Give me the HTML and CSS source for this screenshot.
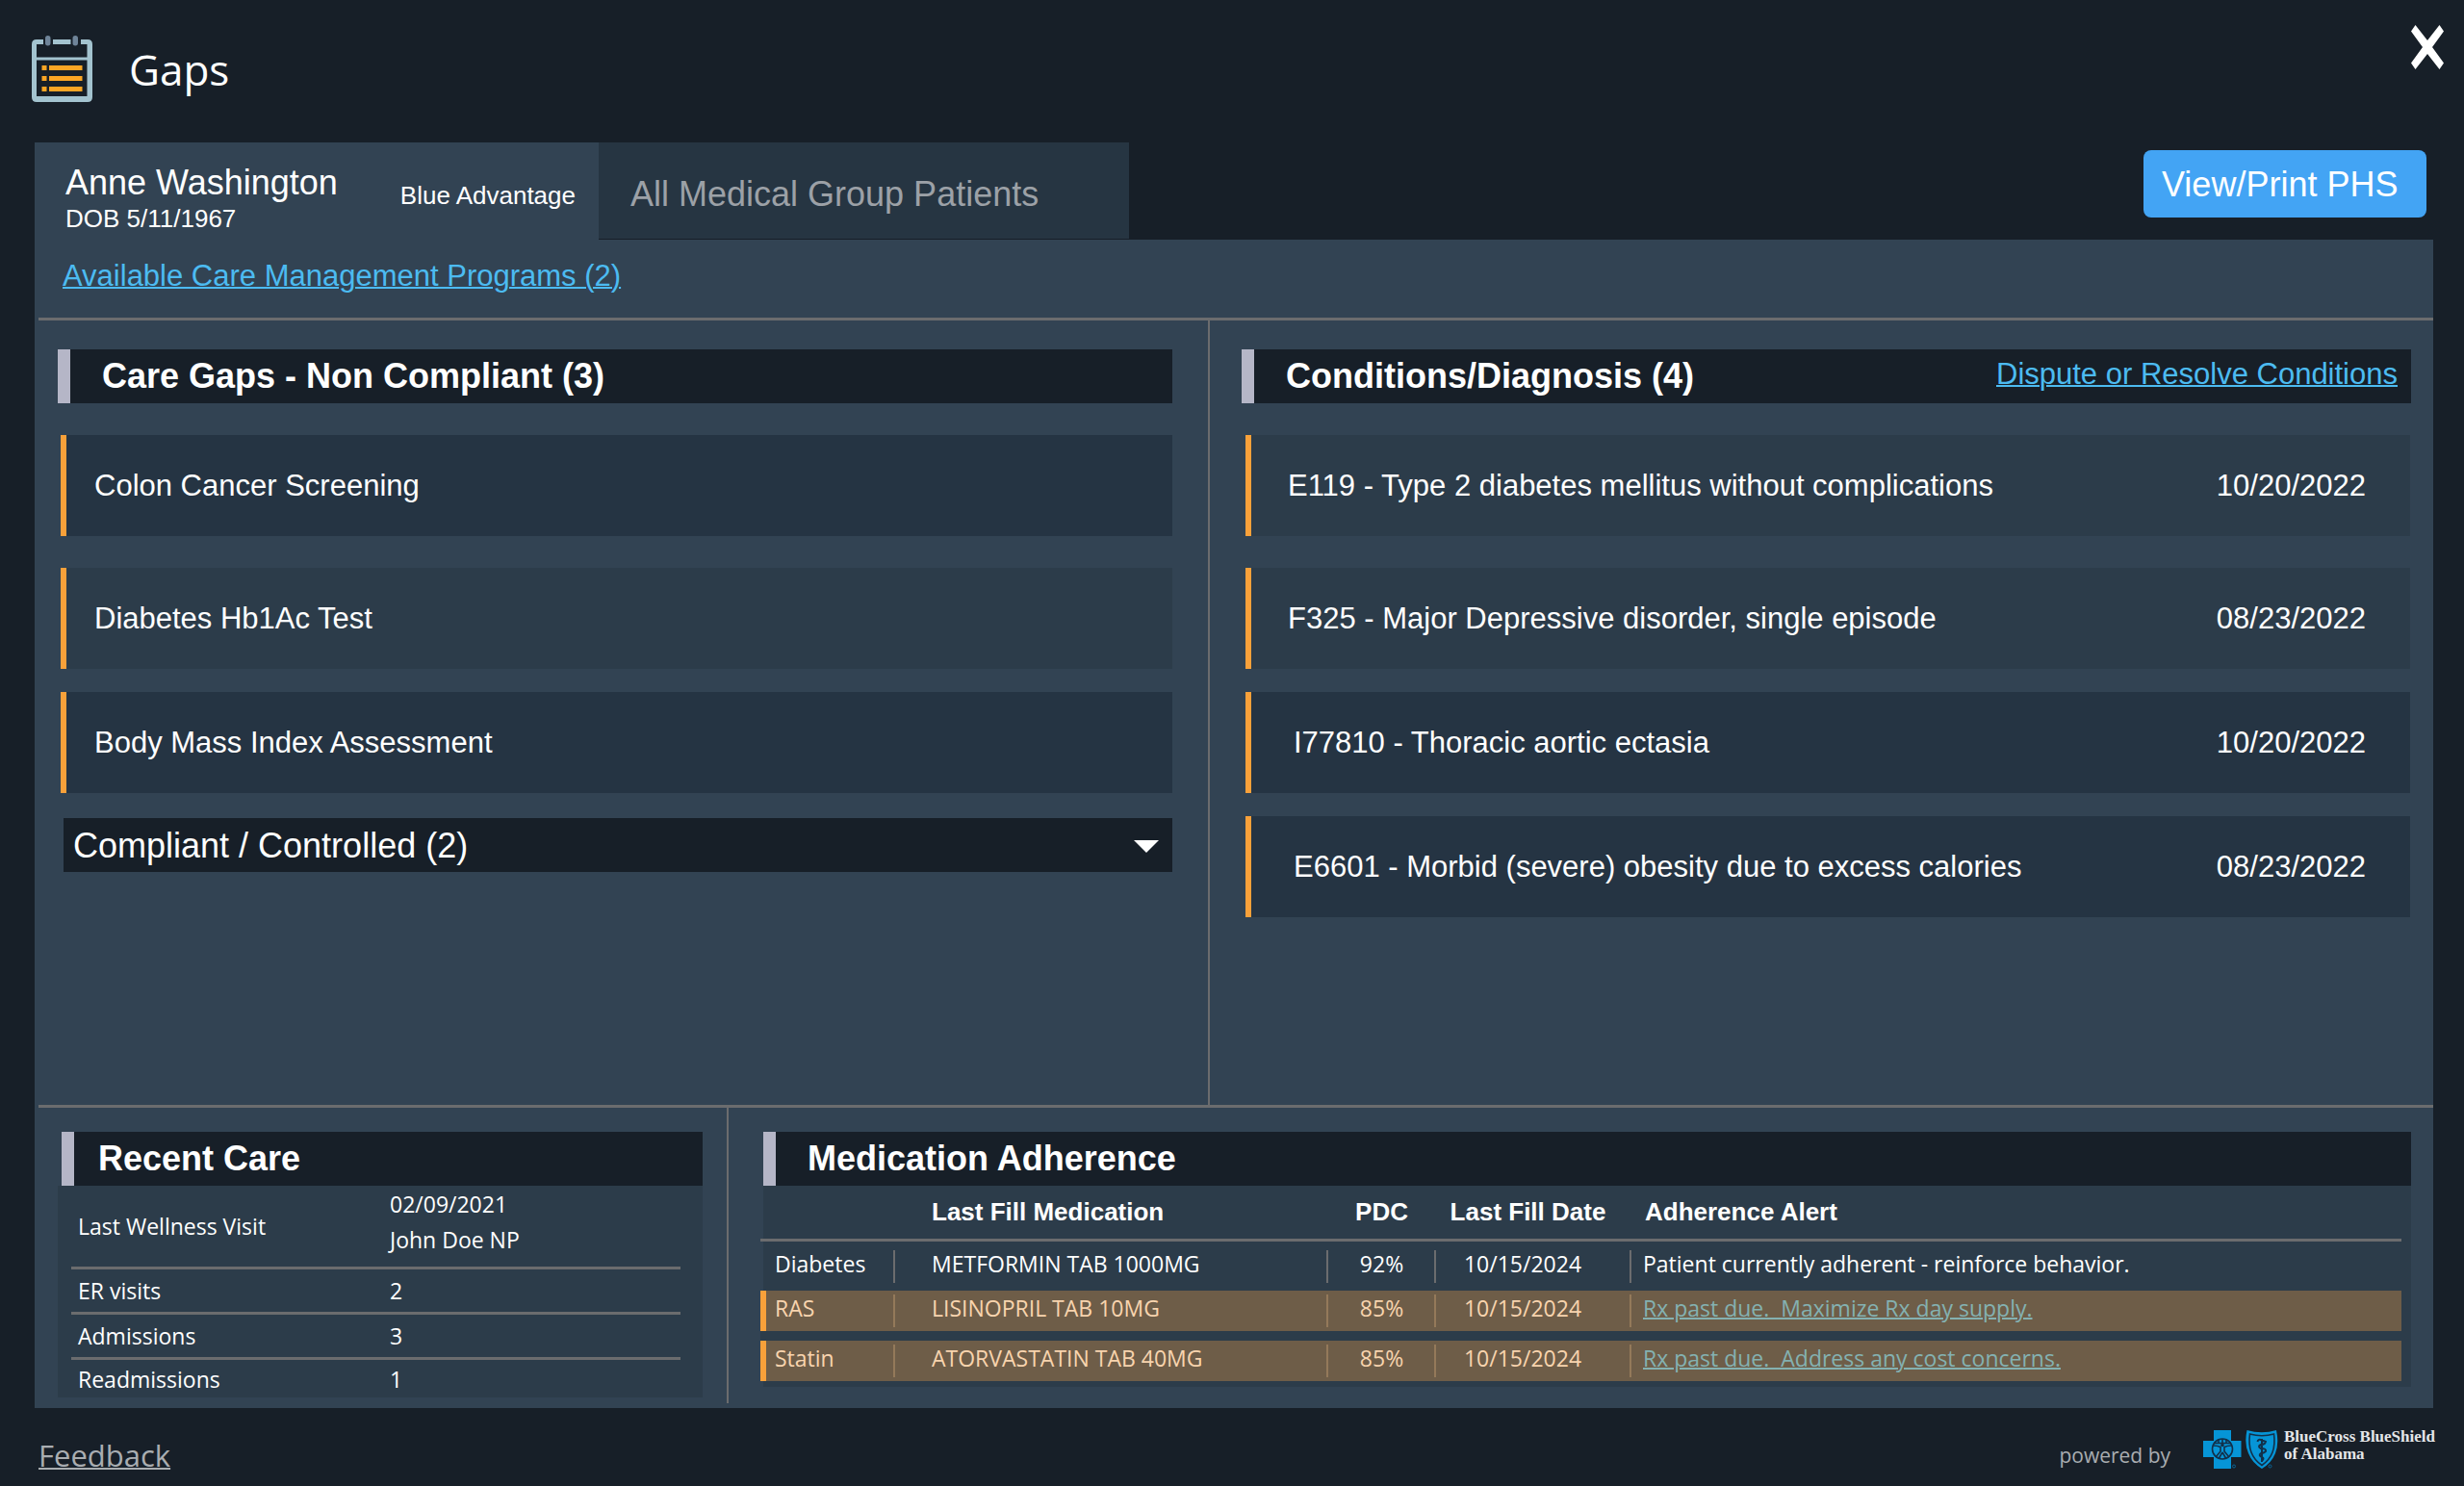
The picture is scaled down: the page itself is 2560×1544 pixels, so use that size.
FILE: index.html
```html
<!DOCTYPE html>
<html lang="en">
<head>
<meta charset="utf-8">
<meta name="viewport" content="width=device-width, initial-scale=1">
<title>Gaps</title>
<link rel="stylesheet" href="styles.css">
</head>
<body>
<header class="topbar">
  <svg class="topbar-icon" viewBox="0 0 63 70" aria-hidden="true">
    <path fill="#a3c3cf" fill-rule="evenodd" d="M5 4H12V9H5V22.500H57.500V9H51V4H58Q63 4 63 9V64Q63 69 58 69H5Q0 69 0 64V9Q0 4 5 4ZM5 25.500V63H57.500V25.500ZM22 4H40.500V9H22Z"/>
    <rect x="14" width="5.500" height="10.500" rx="2.700" fill="#6f8499"/>
    <rect x="42.500" width="5.500" height="10.500" rx="2.700" fill="#6f8499"/>
    <path fill="#fba524" d="M10.500 31h5v5h-5zM18 31h34.500v5H18zM10.500 42h5v5h-5zM18 42h34.500v5H18zM10.500 53h5v5h-5zM18 53h34.500v5H18z"/>
  </svg>
  <h1 class="topbar-title">Gaps</h1>
  <button class="close" type="button" aria-label="Close">
    <svg viewBox="0 0 34 46" aria-hidden="true"><path fill="#fff" d="M4.500 0L17 16L29.500 0L34 6.500L22 23L34 39.500L29.500 46L17 30L4.500 46L0 39.500L12 23L0 6.500Z"/></svg>
  </button>
</header>

<nav class="tabs">
  <button class="tab tab--patient" type="button">
    <span class="patient">
      <span class="patient-name">Anne Washington</span>
      <span class="patient-dob">DOB 5/11/1967</span>
    </span>
    <span class="plan">Blue Advantage</span>
  </button>
  <button class="tab tab--group" type="button">All Medical Group Patients</button>
  <button class="print" type="button">View/Print PHS</button>
</nav>

<main class="panel">
  <div class="programs"><a href="#programs">Available Care Management Programs (2)</a></div>

  <div class="split split--upper">
    <section class="column care-gaps">
      <div class="bar"><h2>Care Gaps - Non Compliant (3)</h2></div>
      <ul class="cards">
        <li class="card card--deep">Colon Cancer Screening</li>
        <li class="card">Diabetes Hb1Ac Test</li>
        <li class="card card--deep">Body Mass Index Assessment</li>
      </ul>
      <button class="expander" type="button" aria-expanded="false">
        Compliant / Controlled (2)
        <svg viewBox="0 0 26 13" aria-hidden="true"><path fill="#fff" d="M0 0H26L13 13Z"/></svg>
      </button>
    </section>
    <section class="column conditions">
      <div class="bar">
        <h2>Conditions/Diagnosis (4)</h2>
        <a href="#dispute">Dispute or Resolve Conditions</a>
      </div>
      <ul class="cards">
        <li class="card">E119 - Type 2 diabetes mellitus without complications<time datetime="2022-10-20">10/20/2022</time></li>
        <li class="card">F325 - Major Depressive disorder, single episode<time datetime="2022-08-23">08/23/2022</time></li>
        <li class="card card--deep">I77810 - Thoracic aortic ectasia<time datetime="2022-10-20">10/20/2022</time></li>
        <li class="card card--deep">E6601 - Morbid (severe) obesity due to excess calories<time datetime="2022-08-23">08/23/2022</time></li>
      </ul>
    </section>
  </div>

  <div class="split split--lower">
    <section class="column recent">
      <div class="bar"><h2>Recent Care</h2></div>
      <div class="sheet">
        <table class="visits">
          <tbody>
            <tr class="visit-last"><th scope="row">Last Wellness Visit</th><td>02/09/2021<br>John Doe NP</td></tr>
            <tr><th scope="row">ER visits</th><td>2</td></tr>
            <tr><th scope="row">Admissions</th><td>3</td></tr>
            <tr><th scope="row">Readmissions</th><td>1</td></tr>
          </tbody>
        </table>
      </div>
    </section>
    <section class="column medication">
      <div class="bar"><h2>Medication Adherence</h2></div>
      <div class="sheet">
        <table class="meds">
          <colgroup><col class="c-type"><col class="c-drug"><col class="c-pdc"><col class="c-date"><col></colgroup>
          <thead>
            <tr><td></td><th scope="col">Last Fill Medication</th><th scope="col">PDC</th><th scope="col">Last Fill Date</th><th scope="col">Adherence Alert</th></tr>
          </thead>
          <tbody>
            <tr><th scope="row">Diabetes</th><td>METFORMIN TAB 1000MG</td><td>92%</td><td>10/15/2024</td><td>Patient currently adherent - reinforce behavior.</td></tr>
            <tr class="due"><th scope="row">RAS</th><td>LISINOPRIL TAB 10MG</td><td>85%</td><td>10/15/2024</td><td><a href="#ras">Rx past due.&nbsp; Maximize Rx day supply.</a></td></tr>
            <tr class="due"><th scope="row">Statin</th><td>ATORVASTATIN TAB 40MG</td><td>85%</td><td>10/15/2024</td><td><a href="#statin">Rx past due.&nbsp; Address any cost concerns.</a></td></tr>
          </tbody>
        </table>
      </div>
    </section>
  </div>
</main>

<footer class="footer">
  <a class="feedback" href="#feedback">Feedback</a>
  <span class="powered">powered by</span>
  <svg class="logo" viewBox="0 0 78 42" aria-hidden="true">
    <path fill="#0695d7" d="M11 1H29V12H39.500V29H29V41H11V29H0V12H11Z"/>
    <g fill="none" stroke="#12304a" stroke-width="1.600">
      <circle cx="20" cy="20.500" r="10.500"/>
      <path d="M11 14.500H29M10 17Q15 17 18 18.500V23L13 29M30 17Q25 17 22 18.500V23L27 29M20 10V14M16 10.500V14M24 10.500V14M20 24L16.500 30M20 24L23.500 30"/>
    </g>
    <circle cx="20" cy="16.500" r="1.800" fill="#12304a"/>
    <path fill="#0695d7" d="M45.500 1Q61 5.500 76 1Q79 15 75 25Q71 35 61 41Q51 35 47 25Q42.500 15 45.500 1Z"/>
    <path fill="none" stroke="#12304a" stroke-width="1.600" d="M48.500 5Q61 8.500 73.500 5Q75 16 72 24Q69 32 61 37.500Q53 32 50 24Q47 16 48.500 5Z"/>
    <path fill="none" stroke="#12304a" stroke-width="2" d="M56.500 13Q57 10 60 11L65 13M61 10V34M65 12Q65 16 60 16Q56 18 60 20Q66 20 65 23Q63 25 60 25Q57 27 61 29Q64 30 61 33"/>
    <circle cx="32" cy="38.500" r="1.500" fill="none" stroke="#0a6597"/>
    <circle cx="69.500" cy="38.500" r="1.500" fill="none" stroke="#0a6597"/>
  </svg>
  <span class="brand">BlueCross BlueShield<br>of Alabama</span>
</footer>
</body>
</html>
```

FILE: styles.css
```css
:root {
  --ink: #171f28;
  --panel: #324353;
  --card: #2c3c4a;
  --card-deep: #253443;
  --rule: #6b6c6e;
  --accent: #f9a13a;
  --link: #4cbbf1;
  --sans: "Liberation Sans", Arial, sans-serif;
  --humanist: "Open Sans", "Noto Sans", sans-serif;
}

* {
  box-sizing: border-box;
}

body {
  margin: 0;
  min-height: 100vh;
  display: flex;
  flex-direction: column;
  background: var(--ink);
  color: #fff;
  font: 31px/36px var(--sans);
}

button {
  border: 0;
  padding: 0;
  color: inherit;
  background: none;
  font: inherit;
  text-align: left;
  cursor: pointer;
}

a {
  color: var(--link);
  text-decoration-thickness: 2px;
}

h1,
h2,
ul {
  margin: 0;
  padding: 0;
}

svg {
  display: block;
}

/* Title bar */
.topbar {
  display: flex;
  align-items: flex-start;
  height: 148px;
  padding: 26px 21px 0 33px;
}

.topbar-icon {
  width: 63px;
  height: 70px;
  margin-top: 11px;
}

.topbar-title {
  margin: 16px 0 0 38px;
  font: 44px/60px var(--humanist);
}

.close {
  margin-left: auto;
}

.close svg {
  width: 34px;
  height: 46px;
}

/* Tabs */
.tabs {
  display: flex;
  align-items: flex-start;
  padding: 0 39px 0 36px;
}

.tab {
  display: flex;
  align-items: center;
  height: 101px;
  padding-top: 8px;
  font-size: 36px;
  line-height: 44px;
}

.tab--patient {
  width: 586px;
  justify-content: space-between;
  padding-left: 32px;
  padding-right: 24px;
  background: var(--panel);
}

.patient,
.patient-name,
.patient-dob {
  display: block;
}

.patient {
  padding-top: 4px;
}

.patient-dob,
.plan {
  font-size: 26px;
  line-height: 30px;
}

.tab--group {
  width: 551px;
  padding-left: 33px;
  background: #263542;
  border-bottom: 1px solid var(--ink);
  color: #9ca1a7;
}

.print {
  width: 294px;
  height: 70px;
  margin: 8px 0 0 auto;
  padding: 2px 0 0 19px;
  border-radius: 8px;
  background: #43a4f4;
  font-size: 36px;
}

/* Main panel */
.panel {
  flex: 1;
  display: flex;
  flex-direction: column;
  margin: 0 32px 0 36px;
  background: var(--panel);
}

.programs {
  padding: 20px 0 25px 29px;
}

.split {
  display: grid;
  padding-top: 3px;
  background: linear-gradient(var(--rule), var(--rule)) 4px 0 / 100% 3px no-repeat;
}

.split--upper {
  flex: 1;
  grid-template-columns: 1219fr 1273fr;
}

.split--lower {
  grid-template-columns: 719fr 1773fr;
  padding-bottom: 5px;
}

.column + .column {
  border-left: 2px solid var(--rule);
}

.bar {
  display: flex;
  align-items: center;
  justify-content: space-between;
  height: 56px;
  padding-left: 33px;
  border-left: 13px solid #b5b6c7;
  background: var(--ink);
}

.bar h2 {
  font-size: 36px;
  line-height: 56px;
}

.bar a {
  padding: 0 14px 4px 0;
}

/* Care gaps and conditions */
.care-gaps {
  padding: 30px 37px 24px 24px;
}

.conditions {
  padding: 30px 23px 24px 33px;
}

.cards {
  display: flex;
  flex-direction: column;
  gap: 24px;
  margin: 33px 0 0 3px;
  list-style: none;
}

.card {
  display: flex;
  align-items: center;
  justify-content: space-between;
  min-height: 105px;
  padding-left: 29px;
  border-left: 6px solid var(--accent);
  background: var(--card);
}

.card:first-child {
  margin-bottom: 9px;
}

.card--deep {
  background: var(--card-deep);
}

.conditions .cards {
  margin-left: 4px;
  margin-right: 1px;
}

.conditions .card {
  padding: 0 46px 0 38px;
}

.conditions .card--deep {
  padding-left: 44px;
}

.expander {
  display: flex;
  align-items: center;
  justify-content: space-between;
  width: calc(100% - 6px);
  height: 56px;
  margin: 26px 0 0 6px;
  padding: 2px 14px 0 10px;
  background: var(--ink);
  font-size: 36px;
}

.expander svg {
  width: 26px;
  height: 13px;
}

/* Recent care */
.recent {
  padding: 25px 25px 6px 24px;
}

.recent .bar {
  margin-left: 4px;
  padding-left: 25px;
}

.sheet {
  background: var(--card);
  font: 23px/30px var(--humanist);
}

table {
  border-spacing: 0;
  table-layout: fixed;
}

th,
td {
  padding: 0;
  font-weight: 400;
  text-align: left;
}

.recent .sheet {
  padding: 0 23px 0 14px;
}

.visits {
  width: 100%;
}

.visits th {
  width: 331px;
  padding-left: 7px;
}

.visits th,
.visits td {
  height: 47px;
  border-bottom: 3px solid var(--rule);
}

.visits .visit-last > * {
  height: 87px;
}

.visits .visit-last td {
  padding-bottom: 8px;
  line-height: 37px;
}

.visits tr:last-child > * {
  height: 39px;
  border-bottom: 0;
}

/* Medication adherence */
.medication {
  padding: 25px 23px 17px 36px;
}

.medication .sheet {
  padding: 0 10px 6px 0;
}

.meds {
  width: calc(100% + 3px);
  margin-left: -3px;
}

.c-type { width: 138px; }
.c-drug { width: 450px; }
.c-pdc { width: 112px; }
.c-date { width: 203px; }

.meds tr > :nth-child(2) {
  padding-left: 40px;
}

.meds tr > :nth-child(3),
.meds tr > :nth-child(4) {
  padding-left: 3px;
  text-align: center;
}

.meds tr > :nth-child(4) {
  padding-right: 11px;
}

.meds td:nth-child(4) {
  padding-right: 22px;
}

.meds tr > :nth-child(5) {
  padding-left: 14px;
}

.meds thead > tr > * {
  height: 58px;
  padding-bottom: 1px;
  border-bottom: 3px solid var(--rule);
  font: 700 26px/30px var(--sans);
}

.meds thead th:last-child {
  padding-left: 16px;
}

.meds tbody > tr > * {
  height: 51px;
  padding-bottom: 5px;
}

.meds tbody th {
  padding-left: 15px;
}

.meds tbody td {
  background: linear-gradient(var(--rule), var(--rule)) 0 50% / 2px 34px no-repeat;
}

.meds .due > * {
  height: 42px;
  padding-bottom: 6px;
  background-color: #6e5d48;
  color: #f8d4ae;
}

.meds .due th {
  box-shadow: inset 6px 0 var(--accent);
}

.meds .due td {
  background-image: linear-gradient(#94795a, #94795a);
}

.meds .due + .due > * {
  height: 52px;
  border-top: 10px solid var(--card);
}

.meds .due a {
  color: #84b1b1;
}

/* Footer */
.footer {
  display: flex;
  align-items: flex-start;
  height: 81px;
  padding: 21px 27px 0 40px;
  color: #a9adb1;
  font: 21px/42px var(--humanist);
}

.feedback {
  margin: 7px auto 0 0;
  color: inherit;
  font-size: 31px;
}

.powered {
  margin: 7px 34px 0 0;
}

.logo {
  width: 78px;
  height: 42px;
  margin: 1px 6px 0 0;
}

.brand {
  min-width: 160px;
  color: #e4e6e8;
  font: 700 17px/18px "Liberation Serif", "Times New Roman", serif;
}
```
